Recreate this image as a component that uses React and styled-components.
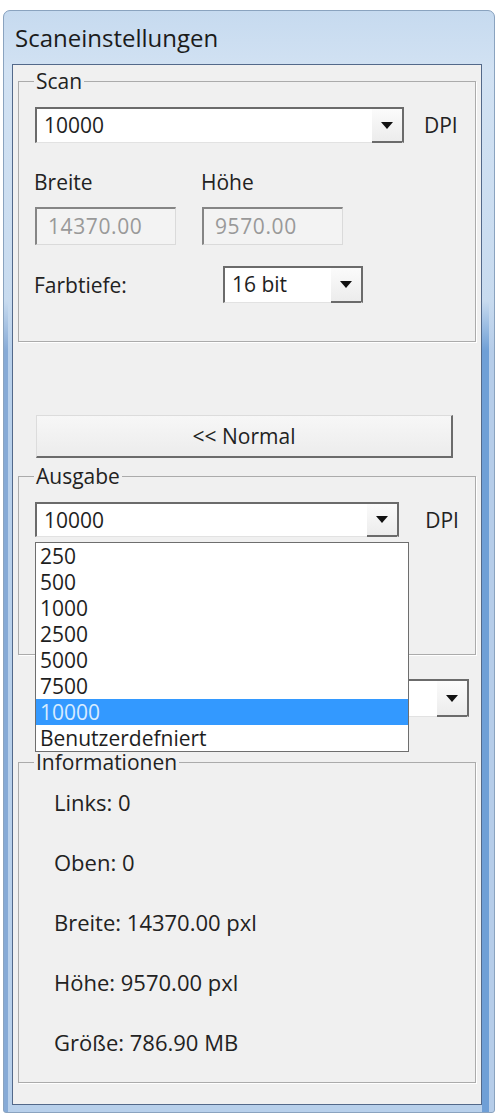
import React from "react";
import styled, { createGlobalStyle } from "styled-components";

const dpiOptions = ["250", "500", "1000", "2500", "5000", "7500", "10000", "Benutzerdefniert"];
const infoRows = ["Links: 0", "Oben: 0", "Breite: 14370.00 pxl", "Höhe: 9570.00 pxl", "Größe: 786.90 MB"];

export default function App() {
  return (
    <>
      <GlobalStyle />
      <Window>
        <TitleBar>Scaneinstellungen</TitleBar>
        <Client>
          <GroupBox $pt={15} $pb={38}>
            <Legend>Scan</Legend>
            <Row $gap={20}>
              <ComboBox $width={369} $height={36}>
                <ComboText>10000</ComboText>
                <ArrowButton />
              </ComboBox>
              <Unit>DPI</Unit>
            </Row>
            <SizeGrid>
              <FieldLabel>Breite</FieldLabel>
              <FieldLabel>Höhe</FieldLabel>
              <ReadOnlyBox>14370.00</ReadOnlyBox>
              <ReadOnlyBox>9570.00</ReadOnlyBox>
            </SizeGrid>
            <DepthRow>
              <FieldLabel>Farbtiefe:</FieldLabel>
              <ComboBox $width={140} $height={37}>
                <ComboText>16 bit</ComboText>
                <ArrowButton />
              </ComboBox>
            </DepthRow>
          </GroupBox>

          <NormalButton>&lt;&lt; Normal</NormalButton>

          <GroupBox $mt={7} $pt={15} $pb={117}>
            <Legend>Ausgabe</Legend>
            <Row $gap={26}>
              <ComboBox $width={369} $height={35}>
                <ComboText>10000</ComboText>
                <ArrowButton />
                <DropList>
                  {dpiOptions.map((o) => (
                    <ListItem key={o} $selected={o === "10000"}>
                      {o}
                    </ListItem>
                  ))}
                </DropList>
              </ComboBox>
              <Unit>DPI</Unit>
            </Row>
          </GroupBox>

          <HiddenRow>
            <ComboBox $width={246} $height={38}>
              <ComboText />
              <ArrowButton />
            </ComboBox>
          </HiddenRow>

          <GroupBox $mt={34} $pt={18} $pb={29}>
            <Legend>Informationen</Legend>
            <InfoList>
              {infoRows.map((r) => (
                <InfoItem key={r}>{r}</InfoItem>
              ))}
            </InfoList>
          </GroupBox>
        </Client>
      </Window>
    </>
  );
}

const GlobalStyle = createGlobalStyle`
  html, body {
    margin: 0;
    background: #fff;
  }
  body {
    font-family: "Open Sans", "Noto Sans", sans-serif;
    color: #222;
  }
`;

const Window = styled.div`
  box-sizing: border-box;
  width: 492px;
  height: 1103px;
  margin: 10px 0 0 3px;
  padding: 0 12px 8px 8px;
  border: 1px solid #8aa3bf;
  border-radius: 7px 7px 3px 3px;
  background:
    linear-gradient(180deg, #c6daef 0, #d2e2f3 60px, #c8dbef 290px, rgba(200, 219, 239, 0) 340px),
    linear-gradient(90deg, #86aad6 0 4px, #b8d0eb 4px 8px, #b8d0eb calc(100% - 12px), #6f9fd6 calc(100% - 12px) calc(100% - 5px), #b6cde9 calc(100% - 5px)),
    #b8d0eb;
`;

const TitleBar = styled.div`
  height: 53px;
  display: flex;
  align-items: center;
  padding-left: 3px;
  font-size: 24px;
  color: #1b1b1b;
`;

const Client = styled.div`
  box-sizing: border-box;
  height: 1041px;
  padding: 5px 5px 0;
  border: 1px solid #53698a;
  background: #f0f0f0;
`;

const GroupBox = styled.fieldset`
  margin: ${(p) => p.$mt || 0}px 0 0;
  padding: ${(p) => p.$pt}px 16px ${(p) => p.$pb}px;
  border: 1px solid #ababab;
  box-shadow: 1px 1px 0 #fff;
  min-width: 0;
`;

const Legend = styled.legend`
  padding: 0 2px;
  margin-left: -1px;
  font-size: 21px;
  line-height: 22px;
  color: #222;
`;

const Row = styled.div`
  display: flex;
  align-items: center;
  gap: ${(p) => p.$gap}px;
`;

const ComboBox = styled.div`
  position: relative;
  box-sizing: border-box;
  display: flex;
  width: ${(p) => p.$width}px;
  height: ${(p) => p.$height}px;
  background: #fff;
  border-top: 2px solid #6b6b6b;
  border-left: 2px solid #6b6b6b;
  border-right: 2px solid #6b6b6b;
  border-bottom: 1px solid #e2e2e2;
`;

const ComboText = styled.div`
  flex: 1;
  padding-left: 7px;
  font-size: 21px;
  line-height: 32px;
  color: #1e1e1e;
`;

const ArrowButton = styled.div`
  width: 30px;
  margin-bottom: -1px;
  border-bottom: 2px solid #6b6b6b;
  background: linear-gradient(180deg, #fbfbfb, #ececec);
  display: flex;
  align-items: center;
  justify-content: center;

  &::after {
    content: "";
    border-left: 6px solid transparent;
    border-right: 6px solid transparent;
    border-top: 7px solid #111;
  }
`;

const Unit = styled.span`
  font-size: 21px;
  color: #222;
`;

const SizeGrid = styled.div`
  display: grid;
  grid-template-columns: 141px 141px;
  column-gap: 26px;
  row-gap: 14px;
  margin-top: 28px;
`;

const FieldLabel = styled.span`
  font-size: 21px;
  line-height: 22px;
  color: #222;
  margin-left: -1px;
`;

const ReadOnlyBox = styled.div`
  box-sizing: border-box;
  height: 38px;
  padding-left: 11px;
  border-top: 2px solid #858585;
  border-left: 2px solid #858585;
  border-right: 1px solid #dadada;
  border-bottom: 1px solid #dadada;
  background: #f3f3f3;
  color: #999;
  font-size: 21px;
  line-height: 34px;
  letter-spacing: 0.6px;
`;

const DepthRow = styled.div`
  display: grid;
  grid-template-columns: 188px auto;
  align-items: center;
  margin-top: 21px;
`;

const NormalButton = styled.button`
  display: block;
  box-sizing: border-box;
  width: 417px;
  height: 43px;
  margin: 73px 0 0 18px;
  padding: 0;
  font-family: inherit;
  font-size: 21px;
  color: #222;
  background: linear-gradient(180deg, #f7f7f7, #ececec);
  border-top: 1px solid #dcdcdc;
  border-left: 1px solid #dcdcdc;
  border-right: 2px solid #6b6b6b;
  border-bottom: 2px solid #6b6b6b;
`;

const DropList = styled.div`
  position: absolute;
  z-index: 5;
  top: calc(100% + 6px);
  left: -2px;
  box-sizing: border-box;
  width: 374px;
  border: 1px solid #6e6e6e;
  background: #fff;
`;

const ListItem = styled.div`
  height: 26px;
  padding-left: 4px;
  font-size: 21px;
  line-height: 26px;
  color: ${(p) => (p.$selected ? "#d8ecff" : "#1e1e1e")};
  background: ${(p) => (p.$selected ? "#3399ff" : "transparent")};
`;

const HiddenRow = styled.div`
  display: flex;
  margin: 24px 0 0 205px;
`;

const InfoList = styled.div`
  display: flex;
  flex-direction: column;
  gap: 38px;
  padding-left: 19px;
`;

const InfoItem = styled.div`
  font-size: 22px;
  line-height: 22px;
  color: #222;
`;
